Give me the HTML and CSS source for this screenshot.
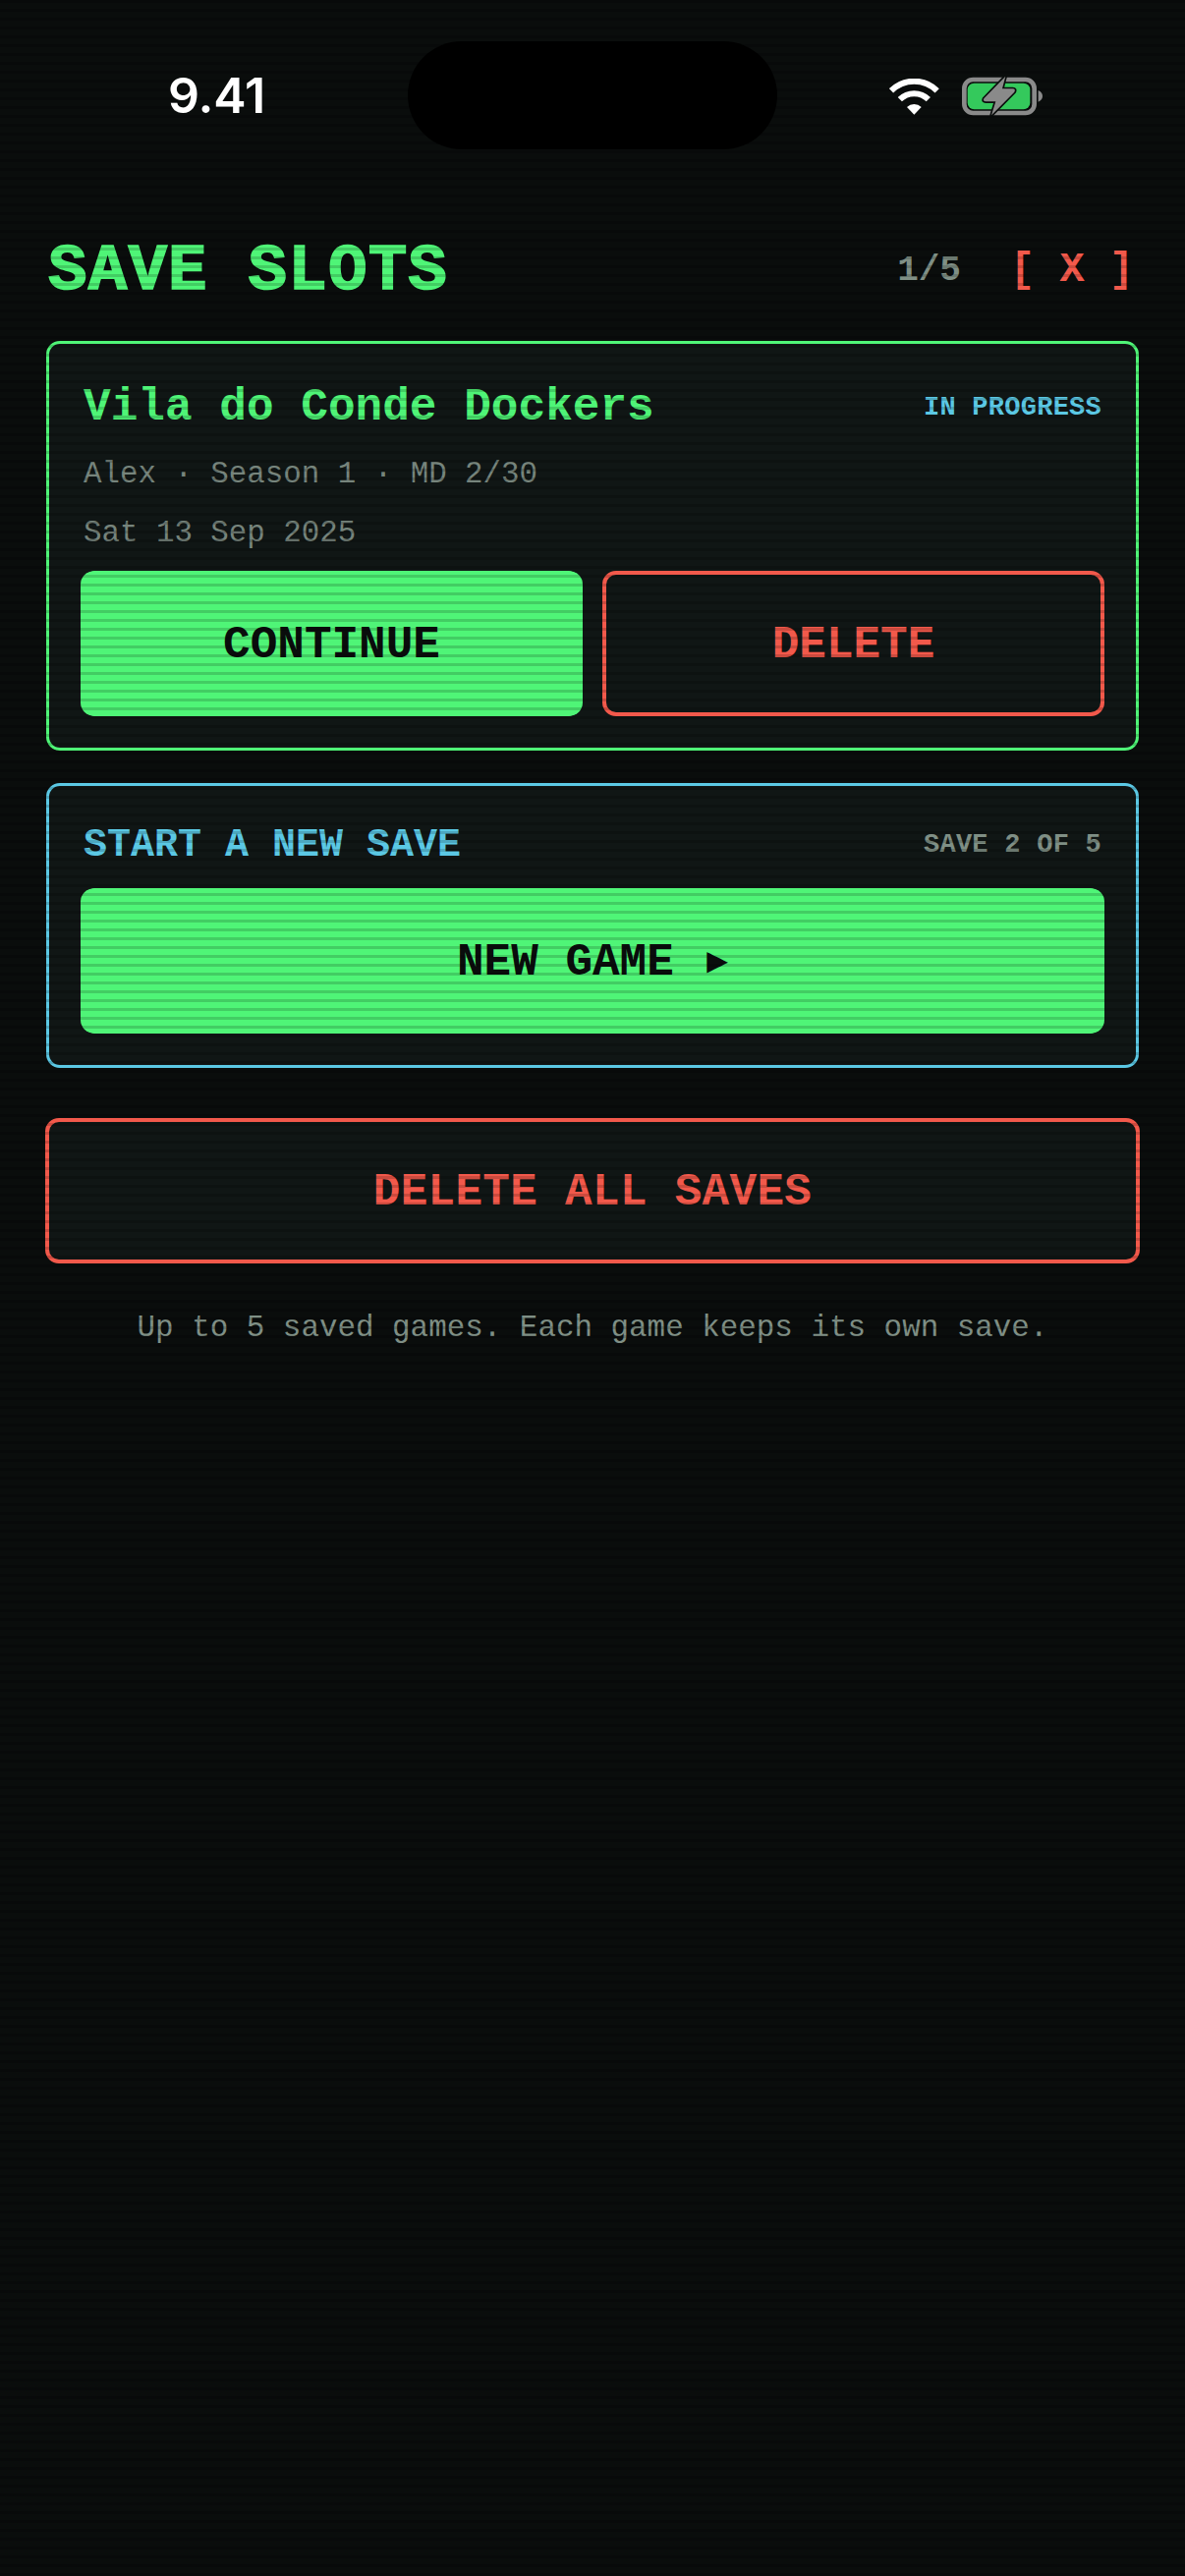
FILE: index.html
```html
<!DOCTYPE html>
<html lang="en">
<head>
    <meta charset="UTF-8">
    <meta name="viewport" content="width=device-width, initial-scale=1.0">
    <title>Save Slots</title>
    <link rel="stylesheet" href="styles.css">
</head>
<body>
    <div class="status-bar">
        <span class="status-time">9.41</span>
        <div class="status-island"></div>
        <div class="status-icons">
            <svg class="icon-wifi" viewBox="75 88 153 111" aria-hidden="true">
                <path d="M81 125A99 99 0 0 1 221 125" fill="none" stroke="#fff" stroke-width="18"/>
                <path d="M107.5 151.5A61.5 61.5 0 0 1 194.5 151.5" fill="none" stroke="#fff" stroke-width="18"/>
                <path d="M151 198L129 175A31 31 0 0 1 173 175Z" fill="#fff"/>
            </svg>
            <svg class="icon-battery" viewBox="295 80 250 125" aria-hidden="true">
                <rect x="302" y="92" width="214" height="102" rx="27" fill="none" stroke="#8a8a8a" stroke-width="14"/>
                <rect x="312" y="103" width="191" height="80" rx="20" fill="#34c95c"/>
                <path d="M528 125Q541 131 541 143Q541 154 528 160Z" fill="#8a8a8a"/>
                <path d="M428 82L362 150Q358 159 368 159L398 159L385 201L455 130Q460 121 450 120L418 120Z" fill="#8a8a8a" stroke="#0a0d0c" stroke-width="10" paint-order="stroke" stroke-linejoin="round"/>
            </svg>
        </div>
    </div>

    <main class="screen">
        <header class="top-row">
            <h1 class="page-title">SAVE SLOTS</h1>
            <div class="top-actions">
                <span class="slot-count">1/5</span>
                <button class="close-btn">[ X ]</button>
            </div>
        </header>

        <section class="card card-green">
            <div class="card-head">
                <h2 class="save-name">Vila do Conde Dockers</h2>
                <span class="tag tag-cyan">IN PROGRESS</span>
            </div>
            <p class="meta">Alex · Season 1 · MD 2/30</p>
            <p class="meta">Sat 13 Sep 2025</p>
            <div class="btn-row">
                <button class="btn btn-primary">CONTINUE</button>
                <button class="btn btn-danger">DELETE</button>
            </div>
        </section>

        <section class="card card-cyan">
            <div class="card-head card-head-small">
                <h2 class="new-title">START A NEW SAVE</h2>
                <span class="tag tag-grey">SAVE 2 OF 5</span>
            </div>
            <button class="btn btn-primary btn-new">NEW GAME <span class="play-mark">▶</span></button>
        </section>

        <button class="btn btn-danger btn-wipe">DELETE ALL SAVES</button>
        <p class="footnote">Up to 5 saved games. Each game keeps its own save.</p>
    </main>
</body>
</html>
```
FILE: styles.css
```css
* {
    box-sizing: border-box;
}

body {
    margin: 0;
    min-height: 2622px;
    background-color: #0a0d0c;
    color: #7f8f85;
    font-family: "Liberation Mono", "DejaVu Sans Mono", monospace;
}

/* CRT scanlines over the whole page */
body::after {
    content: "";
    position: fixed;
    inset: 0;
    z-index: 10;
    pointer-events: none;
    background: repeating-linear-gradient(to bottom, rgba(0, 0, 0, 0.16) 0 3px, transparent 3px 9px);
}

h1, h2, p {
    margin: 0;
}

button {
    font-family: inherit;
    cursor: pointer;
}

.status-bar {
    position: relative;
    z-index: 20;
    display: flex;
    padding: 42px 0 0 171px;
}

.status-time {
    width: 244px;
    padding-top: 30px;
    color: #fff;
    font-family: Inter, sans-serif;
    font-size: 50px;
    font-weight: 600;
    line-height: 50px;
    letter-spacing: -0.1px;
}

.status-island {
    width: 376px;
    height: 110px;
    background-color: #000;
    border-radius: 55px;
}

.status-icons {
    display: flex;
    align-items: flex-start;
    gap: 23px;
    padding: 38px 0 0 114px;
}

.icon-wifi {
    width: 51px;
    height: 37px;
}

.icon-battery {
    width: 83.33px;
    height: 41.67px;
    margin-top: -3px;
}

.screen {
    display: flex;
    flex-direction: column;
    padding: 0 47px;
}

.top-row {
    display: flex;
    align-items: center;
    justify-content: space-between;
    height: 80px;
    margin-top: 81px;
    margin-bottom: 34px;
    padding: 6px 5px 0 0;
}

.page-title {
    padding-left: 2px;
    color: #4ff577;
    font-size: 66px;
    font-weight: 700;
    letter-spacing: 1.1px;
    -webkit-text-stroke: 1.5px #4ff577;
}

.top-actions {
    display: flex;
    align-items: center;
    gap: 50px;
}

.slot-count {
    padding-bottom: 2px;
    font-size: 36px;
    font-weight: 700;
}

.close-btn {
    padding: 0 0 2px;
    border: none;
    background: none;
    color: #f2594b;
    font-size: 42px;
    font-weight: 700;
}

.card {
    padding: 32px;
    background-color: #101615;
    border: 3px solid;
    border-radius: 14px;
}

.card-green {
    border-color: #4ff577;
}

.card-cyan {
    margin-top: 33px;
    border-color: #5bc8e4;
}

.card-head {
    display: flex;
    align-items: center;
    justify-content: space-between;
    height: 60px;
    margin-bottom: 9px;
    padding: 5px 3px 0;
}

.card-head-small {
    height: 52px;
    margin-bottom: 20px;
    padding-top: 4px;
}

.save-name {
    color: #4ff577;
    font-size: 46px;
    font-weight: 700;
    letter-spacing: 0.05px;
}

.new-title {
    color: #5bc8e4;
    font-size: 40px;
    font-weight: 700;
}

.tag {
    font-size: 27px;
    font-weight: 700;
    letter-spacing: 0.25px;
}

.tag-cyan {
    color: #5bc8e4;
}

.meta {
    padding: 3px 3px 0;
    font-size: 30.8px;
    line-height: 57px;
    color: #76847c;
}

.btn-row {
    display: grid;
    grid-template-columns: 1fr 1fr;
    gap: 20px;
    margin-top: 10px;
}

.btn {
    height: 148px;
    padding: 4px 0 0;
    font-size: 46px;
    font-weight: 700;
    border-radius: 14px;
}

.btn-primary {
    border: none;
    background-color: #4ff577;
    color: #0a0d0c;
    /* stepped corners */
    clip-path: polygon(
        0 7px, 2px 7px, 2px 5px, 6px 2px, 12px 0,
        calc(100% - 12px) 0, calc(100% - 6px) 2px, calc(100% - 2px) 5px, calc(100% - 2px) 7px, 100% 7px,
        100% calc(100% - 7px), calc(100% - 2px) calc(100% - 7px), calc(100% - 2px) calc(100% - 5px), calc(100% - 6px) calc(100% - 2px), calc(100% - 12px) 100%,
        12px 100%, 6px calc(100% - 2px), 2px calc(100% - 5px), 2px calc(100% - 7px), 0 calc(100% - 7px)
    );
}

.btn-new {
    display: block;
    width: 100%;
}

.play-mark {
    display: inline-block;
    width: 27.6px;
    font-size: 36px;
    line-height: 40px;
    text-align: right;
    vertical-align: 3px;
}

.btn-danger {
    background-color: transparent;
    border: 4.5px solid #f2594b;
    color: #f2594b;
}

.btn-wipe {
    margin: 51px -1px 0;
    background-color: #101615;
    letter-spacing: 0.3px;
}

.footnote {
    margin-top: 44px;
    font-size: 30.9px;
    line-height: 44px;
    text-align: center;
}
```
